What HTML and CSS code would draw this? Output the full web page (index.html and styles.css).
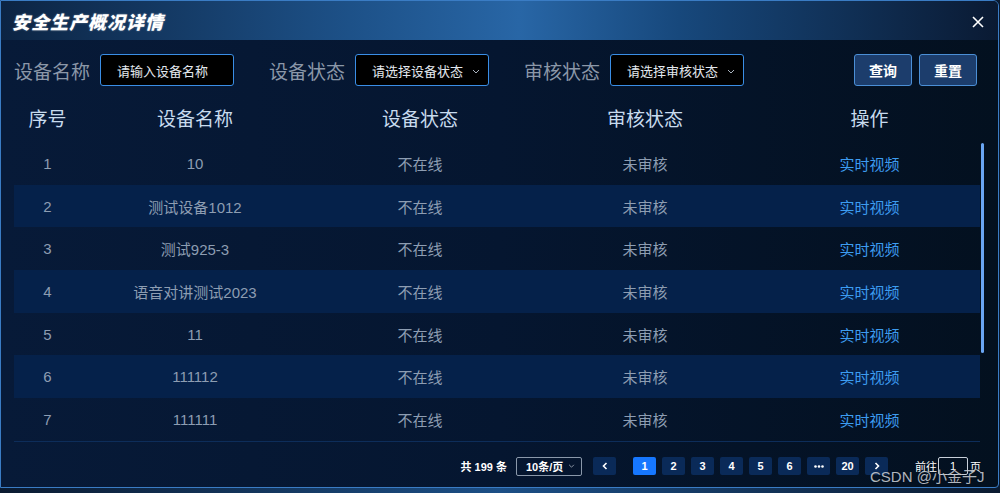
FILE: index.html
```html
<!DOCTYPE html>
<html lang="zh-CN">
<head>
    <meta charset="UTF-8">
    <title>安全生产概况详情</title>
    <link rel="stylesheet" href="styles.css">
</head>
<body>
    <div class="dialog">
        <div class="dialog-header">
            <span class="dialog-title">安全生产概况详情</span>
            <span class="close-btn">
                <svg width="12" height="12" viewBox="0 0 12 12"><path d="M1 1L11 11M11 1L1 11" stroke="#fff" stroke-width="1.6"/></svg>
            </span>
        </div>

        <div class="filter-bar">
            <span class="filter-label">设备名称</span>
            <div class="input-box">请输入设备名称</div>
            <span class="filter-label">设备状态</span>
            <div class="input-box select">请选择设备状态<svg class="arrow" width="8" height="5" viewBox="0 0 8 5"><path d="M1 1L4 4L7 1" fill="none" stroke="#aab4c0" stroke-width="1"/></svg></div>
            <span class="filter-label">审核状态</span>
            <div class="input-box select">请选择审核状态<svg class="arrow" width="8" height="5" viewBox="0 0 8 5"><path d="M1 1L4 4L7 1" fill="none" stroke="#aab4c0" stroke-width="1"/></svg></div>
            <div class="filter-actions">
                <button class="btn">查询</button>
                <button class="btn">重置</button>
            </div>
        </div>

        <div class="table">
            <div class="row head">
                <span>序号</span><span>设备名称</span><span>设备状态</span><span>审核状态</span><span>操作</span>
            </div>
            <div class="table-scroll">
                <div class="table-body">
                    <div class="row"><span>1</span><span>10</span><span>不在线</span><span>未审核</span><a class="link">实时视频</a></div>
                    <div class="row"><span>2</span><span>测试设备1012</span><span>不在线</span><span>未审核</span><a class="link">实时视频</a></div>
                    <div class="row"><span>3</span><span>测试925-3</span><span>不在线</span><span>未审核</span><a class="link">实时视频</a></div>
                    <div class="row"><span>4</span><span>语音对讲测试2023</span><span>不在线</span><span>未审核</span><a class="link">实时视频</a></div>
                    <div class="row"><span>5</span><span>11</span><span>不在线</span><span>未审核</span><a class="link">实时视频</a></div>
                    <div class="row"><span>6</span><span>111112</span><span>不在线</span><span>未审核</span><a class="link">实时视频</a></div>
                    <div class="row"><span>7</span><span>111111</span><span>不在线</span><span>未审核</span><a class="link">实时视频</a></div>
                </div>
                <div class="scrollbar"><div class="thumb"></div></div>
            </div>
        </div>

        <div class="pager">
            <span class="pager-total">共 199 条</span>
            <div class="pager-size">10条/页<svg width="7" height="4" viewBox="0 0 8 5"><path d="M1 1L4 4L7 1" fill="none" stroke="#aab4c0" stroke-width="1"/></svg></div>
            <span class="page-btn nav">
                <svg width="6" height="8" viewBox="0 0 6 8"><path d="M4.5 1L1.5 4L4.5 7" fill="none" stroke="#fff" stroke-width="1.6"/></svg>
            </span>
            <ul class="pages">
                <li class="page-btn active">1</li>
                <li class="page-btn">2</li>
                <li class="page-btn">3</li>
                <li class="page-btn">4</li>
                <li class="page-btn">5</li>
                <li class="page-btn">6</li>
                <li class="page-btn">
                    <svg width="10" height="3" viewBox="0 0 10 3"><circle cx="1.5" cy="1.5" r="1.3" fill="#fff"/><circle cx="5" cy="1.5" r="1.3" fill="#fff"/><circle cx="8.5" cy="1.5" r="1.3" fill="#fff"/></svg>
                </li>
                <li class="page-btn">20</li>
            </ul>
            <span class="page-btn nav">
                <svg width="6" height="8" viewBox="0 0 6 8"><path d="M1.5 1L4.5 4L1.5 7" fill="none" stroke="#fff" stroke-width="1.6"/></svg>
            </span>
            <span class="pager-jump">前往<span class="jump-input">1</span>页</span>
        </div>
    </div>

    <div class="watermark">CSDN @小金子J</div>
</body>
</html>
```

FILE: styles.css
```css
body {
    margin: 0;
    height: 493px;
    overflow: hidden;
    font-family: "Liberation Sans", "Noto Sans CJK SC", sans-serif;
    background: linear-gradient(90deg, #0a1a30 0%, #1c4f86 50%, #0a1a30 100%);
}
.dialog {
    width: 997px;
    height: 486px;
    border: 1px solid #3a7cc4;
    border-radius: 0 6px 4px 0;
    background: linear-gradient(90deg, #071a38 0%, #051630 50%, #03101f 100%);
    overflow: hidden;
}
.dialog-header {
    height: 39px;
    display: flex;
    align-items: center;
    justify-content: space-between;
    padding: 0 14px 0 11px;
    background: linear-gradient(90deg, #0c2443 0%, #1d5188 35%, #2866a6 52%, #17487c 68%, #0a1a33 100%);
}
.dialog-title {
    color: #fff;
    font-size: 18px;
    font-weight: 900;
    font-style: italic;
    letter-spacing: 1px;
    text-shadow: 0 0 2px rgba(255,255,255,0.4);
}
.close-btn {
    display: flex;
    margin-top: 2px;
}
.filter-bar {
    display: flex;
    align-items: center;
    margin-top: 14px;
    padding: 0 21px 0 13px;
    height: 32px;
}
.filter-label {
    color: #8b97a8;
    font-size: 19px;
    margin-right: 10px;
}
.input-box {
    box-sizing: border-box;
    width: 134px;
    height: 32px;
    margin-right: 35px;
    padding-left: 16px;
    display: flex;
    align-items: center;
    background: #000;
    border: 1px solid #3a8ee6;
    border-radius: 3px;
    color: #e3e8ee;
    font-size: 13px;
}
.input-box.select {
    justify-content: space-between;
    padding-right: 8px;
}
.arrow {
    margin-top: 2px;
}
.filter-actions {
    margin-left: auto;
    display: flex;
    gap: 7px;
}
.btn {
    width: 58px;
    height: 32px;
    background: #1c3d6c;
    border: 1px solid #4b8fd6;
    border-radius: 3px;
    color: #fff;
    font-family: inherit;
    font-size: 14px;
    font-weight: bold;
}
.table {
    margin: 11px 0 0 13px;
}
.row {
    display: grid;
    grid-template-columns: 67px 228px 222px 228px 221px;
    height: 42.7px;
    align-items: center;
    text-align: center;
    color: #8d9db2;
    font-size: 15px;
}
.row.head {
    height: 41px;
    padding-bottom: 4px;
    color: #c8dbee;
    font-size: 19px;
}
.table-scroll {
    display: flex;
}
.table-body {
    width: 966px;
    height: 299px;
    overflow: hidden;
    border-bottom: 1px solid #0d2d5a;
}
.table-body .row:nth-child(even) {
    background: #05214a;
}
.scrollbar {
    padding: 1px 2px 0 1px;
}
.thumb {
    width: 3px;
    height: 210px;
    background: #6aa6f4;
    border-radius: 2px;
}
.link {
    color: #3d9cf0;
    cursor: pointer;
}
.pager {
    display: flex;
    align-items: center;
    justify-content: flex-end;
    height: 18px;
    margin-top: 15px;
    padding-right: 17px;
    color: #fff;
    font-size: 12px;
    font-weight: bold;
}
.pager-total {
    margin-right: 9px;
    font-size: 11px;
}
.pager-size {
    box-sizing: border-box;
    width: 66px;
    height: 19px;
    display: flex;
    align-items: center;
    justify-content: space-between;
    padding: 0 6px 0 9px;
    border: 1px solid #8a98aa;
    border-radius: 2px;
    margin-right: 11px;
    font-size: 11px;
}
.pages {
    display: flex;
    gap: 6px;
    list-style: none;
    margin: 0 6px 0 17px;
    padding: 0;
}
.page-btn {
    width: 23px;
    height: 18px;
    display: flex;
    align-items: center;
    justify-content: center;
    background: #0a2a58;
    border-radius: 2px;
    font-size: 11px;
}
.page-btn.active {
    background: #1677ff;
}
.pager-jump {
    display: flex;
    align-items: center;
    margin-left: 27px;
    font-size: 11px;
    font-weight: normal;
}
.jump-input {
    box-sizing: border-box;
    width: 30px;
    height: 18px;
    margin: 0 2px 0 1px;
    border: 1px solid #c8d0da;
    border-radius: 2px;
    text-align: center;
    line-height: 16px;
}
.watermark {
    position: absolute;
    left: 870px;
    top: 465px;
    color: rgba(235, 240, 248, 0.75);
    font-size: 15px;
    text-shadow: 0 0 1px rgba(0,0,0,0.6);
}
```
